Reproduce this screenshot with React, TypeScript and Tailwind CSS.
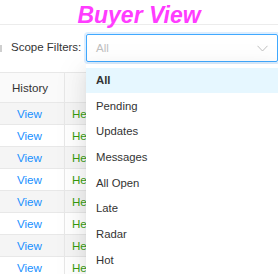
import React from "react";

const options = ["All", "Pending", "Updates", "Messages", "All Open", "Late", "Radar", "Hot"];

const rows = Array.from({ length: 8 }, (_, i) => i);

function Chevron() {
	return (
		<svg width="11" height="7" viewBox="0 0 11 7" fill="none">
			<path d="M0.5 0.8 L5.5 6 L10.5 0.8" stroke="#bfbfbf" strokeWidth="1" />
		</svg>
	);
}

export default function App() {
	return (
		<div
			className="relative w-[278px] h-[274px] overflow-hidden bg-white text-[#333]"
			style={{ fontFamily: '"Liberation Sans", Arial, sans-serif' }}
		>
			{/* Title */}
			<div className="h-[25px] border-b border-[#ececec] pt-[3px] text-center leading-[24px]">
				<span className="text-[23px] font-bold italic text-[#ff3cff]">Buyer View</span>
			</div>

			{/* Filters */}
			<div className="relative flex items-center justify-between pl-[11px] pt-[9px] pb-[10px]">
				<div className="absolute left-0 top-[20px] w-[2px] h-[7px] bg-[#cfcfcf]" />
				<span className="text-[11.5px]">Scope Filters:</span>
				<div className="flex h-[28px] w-[192px] items-center justify-between rounded-[2px] border border-[#40a9ff] pl-[9px] pr-[9px] shadow-[0_0_0_2px_rgba(24,144,255,0.15)]">
					<span className="text-[11.6px] text-[#bfbfbf]">All</span>
					<Chevron />
				</div>
			</div>

			{/* Table */}
			<div className="border-t border-[#e8e8e8]">
				<div className="grid h-[30px] grid-cols-[65px_1fr] border-b border-[#e8e8e8] bg-[#fafafa]">
					<div className="flex items-center border-r border-[#e8e8e8] pl-[12px] text-[11.6px]">History</div>
					<div />
				</div>
				{rows.map((r) => (
					<div
						key={r}
						className={`grid h-[22px] grid-cols-[65px_1fr] border-b border-[#e8e8e8] ${r % 2 === 0 ? "bg-[#f5f5f5]" : "bg-white"}`}
					>
						<div className="flex items-center border-r border-[#e8e8e8] pl-[17px] text-[11.6px] text-[#1890ff]">View</div>
						<div className="flex items-center pl-[7px] text-[11.6px] text-[#389e0d]">Help</div>
					</div>
				))}
			</div>

			{/* Dropdown menu */}
			<div className="absolute left-[86px] right-0 top-[64px] bg-white pt-[3.5px] pb-[4px] shadow-[0_3px_6px_-4px_rgba(0,0,0,0.12),0_6px_16px_0_rgba(0,0,0,0.08),0_9px_28px_8px_rgba(0,0,0,0.05)]">
				{options.map((o, i) => (
					<div
						key={o}
						className={`flex h-[25.7px] items-center pl-[10px] text-[11.3px] ${i === 0 ? "bg-[#e6f7ff] font-bold" : ""}`}
					>
						{o}
					</div>
				))}
			</div>
		</div>
	);
}
